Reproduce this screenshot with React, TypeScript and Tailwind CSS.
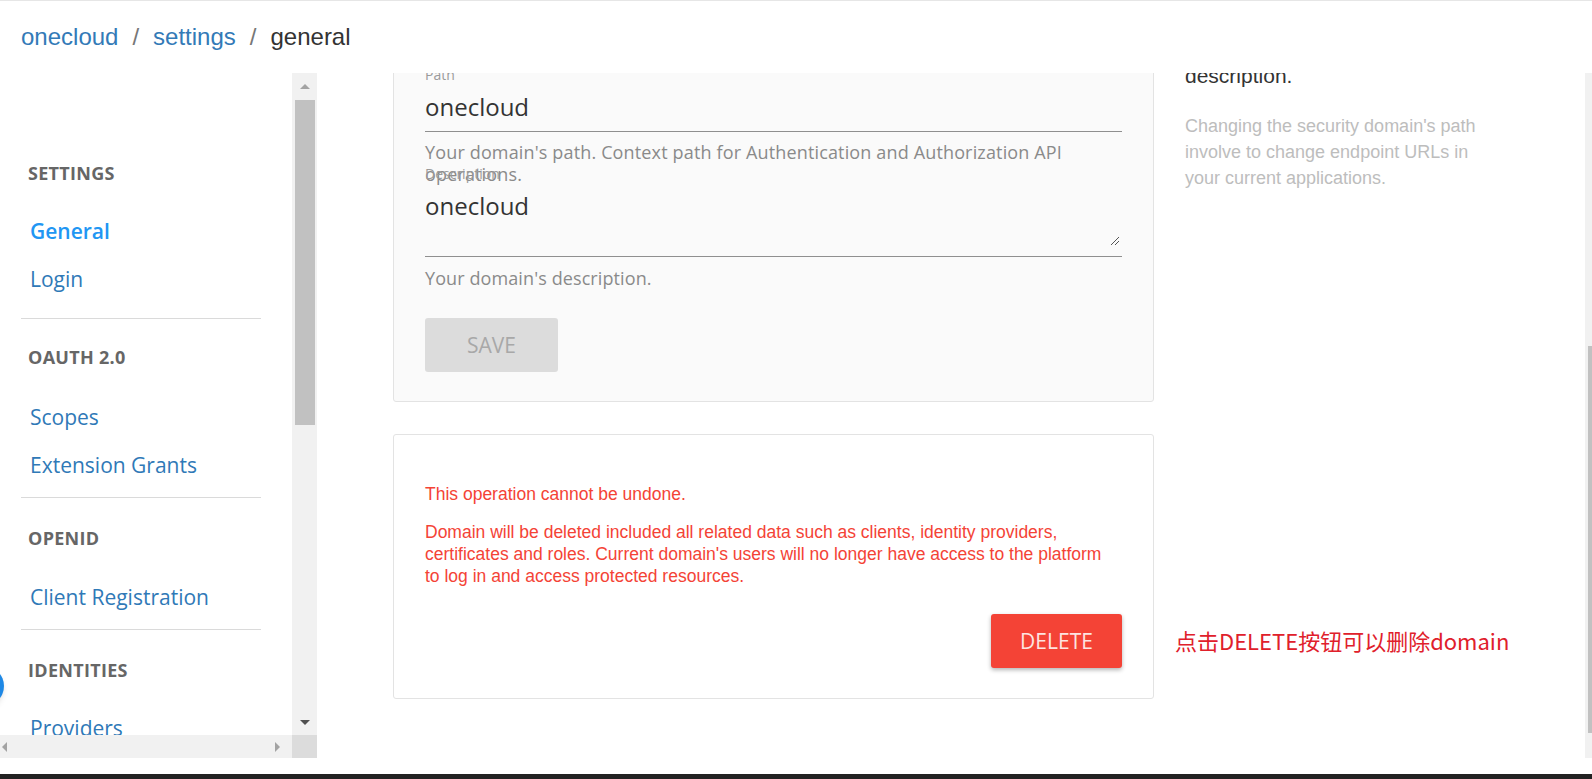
const NAV = [
  { type: 'header', label: 'SETTINGS', mt: 'mt-[88px]' },
  { type: 'link', label: 'General', mt: 'mt-[31px]', active: true },
  { type: 'link', label: 'Login', mt: 'mt-[18px]' },
  { type: 'divider', mt: 'mt-[24px]' },
  { type: 'header', label: 'OAUTH 2.0', mt: 'mt-[26px]' },
  { type: 'link', label: 'Scopes', mt: 'mt-[33px]' },
  { type: 'link', label: 'Extension Grants', mt: 'mt-[18px]' },
  { type: 'divider', mt: 'mt-[17px]' },
  { type: 'header', label: 'OPENID', mt: 'mt-[28px]' },
  { type: 'link', label: 'Client Registration', mt: 'mt-[32px]' },
  { type: 'divider', mt: 'mt-[17px]' },
  { type: 'header', label: 'IDENTITIES', mt: 'mt-[28px]' },
  { type: 'link', label: 'Providers', mt: 'mt-[31px]' },
]

function Sidebar() {
  return (
    <div className="relative flex w-[317px] shrink-0 flex-col">
      <div className="flex h-[662px]">
        <nav className="relative w-[292px] overflow-hidden font-['Open_Sans',sans-serif]">
          {NAV.map((item, i) => {
            if (item.type === 'divider') {
              return <div key={i} className={`${item.mt} ml-[21px] h-px w-[240px] bg-[#dadada]`} />
            }
            if (item.type === 'header') {
              return (
                <div key={i} className={`${item.mt} pl-[28px] text-[18px] leading-[24px] font-bold tracking-[0.3px] text-[#666]`}>
                  {item.label}
                </div>
              )
            }
            return (
              <a
                key={i}
                className={`${item.mt} block pl-[30px] text-[21px] leading-[30px] ${
                  item.active ? 'font-semibold text-[#2196f3]' : 'text-[#2f79b7]'
                }`}
              >
                {item.label}
              </a>
            )
          })}
        </nav>
        {/* vertical scrollbar */}
        <div className="flex w-[25px] flex-col items-center bg-[#f1f1f1]">
          <div className="flex h-[27px] items-center justify-center">
            <div className="h-0 w-0 border-x-[5px] border-b-[5px] border-x-transparent border-b-[#a3a3a3]" />
          </div>
          <div className="h-[325px] w-[20px] bg-[#c1c1c1]" />
          <div className="flex-1" />
          <div className="flex h-[25px] items-center justify-center">
            <div className="h-0 w-0 border-x-[5px] border-t-[5px] border-x-transparent border-t-[#505050]" />
          </div>
        </div>
      </div>
      {/* horizontal scrollbar */}
      <div className="flex h-[23px]">
        <div className="flex w-[292px] items-center justify-between bg-[#f1f1f1] px-[2px]">
          <div className="h-0 w-0 border-y-[5px] border-r-[5px] border-y-transparent border-r-[#a3a3a3]" />
          <div className="mr-[10px] h-0 w-0 border-y-[5px] border-l-[5px] border-y-transparent border-l-[#a3a3a3]" />
        </div>
        <div className="w-[25px] bg-[#dcdcdc]" />
      </div>
      <div className="absolute top-[593px] left-[-36px] h-[40px] w-[40px] rounded-full bg-[#1e88e5] shadow-md" />
    </div>
  )
}

function GeneralCard() {
  return (
    <div className="rounded-[3px] border border-[#e3e3e3] bg-[#fafafa] px-[31px] pt-[32px] pb-[29px] font-['Open_Sans',sans-serif]">
      <div className="text-[14px] leading-[20px] text-[#9a9a9a]">Path</div>
      <div className="border-b border-[#8f8f8f] pt-[4px] pb-[6px] text-[24px] leading-[36px] text-[#333]">onecloud</div>
      <p className="mt-[9px] text-[18px] leading-[22px] tracking-[0.15px] text-[#8a8a8a]">
        Your domain's path. Context path for Authentication and Authorization API
        <br />
        operations.
      </p>
      <div className="mt-[-21px] text-[14px] leading-[20px] text-[#9a9a9a]">Description</div>
      <div className="relative h-[73px] border-b border-[#8f8f8f] pt-[4px] text-[24px] leading-[36px] text-[#333]">
        onecloud
        <svg className="absolute right-[2px] bottom-[10px]" width="10" height="10" viewBox="0 0 10 10">
          <path d="M9 1 L1 9 M9 5 L5 9" stroke="#555" strokeWidth="1" fill="none" />
        </svg>
      </div>
      <p className="mt-[10px] text-[18px] leading-[22px] tracking-[0.1px] text-[#8a8a8a]">Your domain's description.</p>
      <button className="mt-[29px] h-[54px] w-[133px] rounded-[3px] bg-[#dcdcdc] text-[21px] text-[#a8a8a8]">SAVE</button>
    </div>
  )
}

function DangerCard() {
  return (
    <div className="mt-[32px] rounded-[3px] border border-[#e3e3e3] bg-white px-[31px] pt-[48px] pb-[30px] font-['Liberation_Sans',Arial,sans-serif] text-[17.5px] leading-[22px] text-[#f44336]">
      <p>This operation cannot be undone.</p>
      <p className="mt-[16px]">
        Domain will be deleted included all related data such as clients, identity providers,
        <br />
        certificates and roles. Current domain's users will no longer have access to the platform
        <br />
        to log in and access protected resources.
      </p>
      <div className="mt-[27px] flex justify-end">
        <button className="h-[54px] w-[131px] rounded-[3px] bg-[#f44336] font-['Open_Sans',sans-serif] text-[21px] text-[#fde4e1] shadow-[0_2px_4px_rgba(0,0,0,0.3)]">
          DELETE
        </button>
      </div>
    </div>
  )
}

export default function App() {
  return (
    <div className="relative flex h-[779px] w-[1592px] flex-col overflow-hidden border-t border-[#e6e6e6] bg-white">
      <header className="flex h-[74px] items-center pl-[21px] font-['Liberation_Sans',Arial,sans-serif] text-[24px] text-[#337ab7]">
        <a>onecloud</a>
        <span className="mx-[14px] text-[#777]">/</span>
        <a>settings</a>
        <span className="mx-[14px] text-[#777]">/</span>
        <span className="text-[#333]">general</span>
      </header>

      <div className="flex h-[685px]">
        <Sidebar />

        <main className="relative flex-1 overflow-hidden">
          <div className="mt-[-41px] flex items-start pl-[76px]">
            <div className="w-[761px] shrink-0">
              <GeneralCard />
              <DangerCard />
            </div>
            <aside className="ml-[31px] w-[320px] pt-[30px] font-['Liberation_Sans',Arial,sans-serif]">
              <h3 className="text-[21px] leading-[28px] text-[#333]">description.</h3>
              <p className="mt-[23px] w-[300px] text-[18px] leading-[26px] text-[#bdbdbd]">
                Changing the security domain's path involve to change endpoint URLs in your current applications.
              </p>
              <p className="mt-[433px] ml-[-10px] whitespace-nowrap font-['Noto_Sans_CJK_SC',sans-serif] text-[22px] text-[#e0202b]">
                点击DELETE按钮可以删除domain
              </p>
            </aside>
          </div>
          {/* page scrollbar */}
          <div className="absolute top-0 right-0 h-[685px] w-[7px] bg-[#f1f1f1]">
            <div className="mt-[273px] ml-[3px] h-[387px] w-[4px] bg-[#c1c1c1]" />
          </div>
        </main>
      </div>

      <div className="h-[16px] bg-white" />
      <div className="h-[5px] bg-[#222]" />
    </div>
  )
}
